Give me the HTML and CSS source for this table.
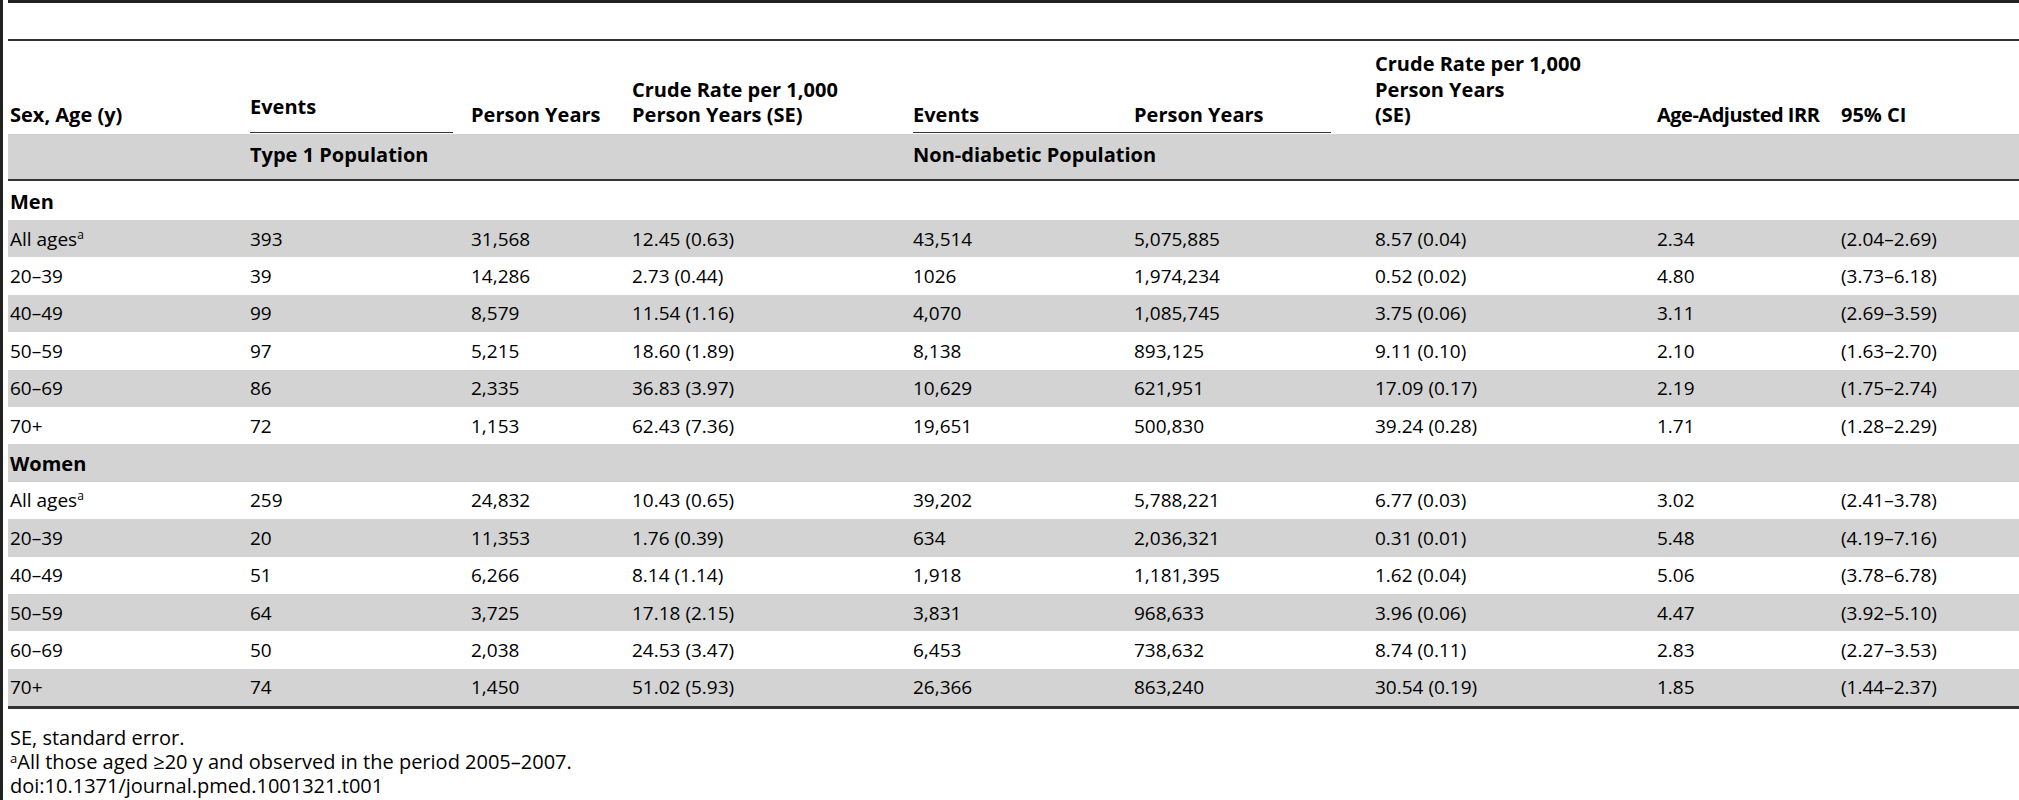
FILE: index.html
```html
<!DOCTYPE html>
<html lang="en">

<head>
    <meta charset="UTF-8">
    <title>Table 1</title>
    <link rel="stylesheet" href="styles.css">
</head>

<body>
    <div class="page">
        <table class="rates">
            <colgroup>
                <col class="c-sex">
                <col class="c-events">
                <col class="c-py">
                <col class="c-crude">
                <col class="c-events2">
                <col class="c-py2">
                <col class="c-crude2">
                <col class="c-irr">
                <col class="c-ci">
            </colgroup>
            <thead>
                <tr class="caption-row">
                    <td colspan="9"></td>
                </tr>
                <tr class="head-row">
                    <th class="first">Sex, Age (y)</th>
                    <th class="ul-single"><div class="ul raised">Events</div></th>
                    <th>Person Years</th>
                    <th>Crude Rate per 1,000<br>Person Years (SE)</th>
                    <th class="ul-start"><div class="ul">Events</div></th>
                    <th class="ul-end"><div class="ul">Person Years</div></th>
                    <th>Crude Rate per 1,000<br>Person Years<br>(SE)</th>
                    <th class="irr">Age-Adjusted IRR</th>
                    <th>95% CI</th>
                </tr>
                <tr class="group-row">
                    <th class="first"></th>
                    <th colspan="3">Type 1 Population</th>
                    <th colspan="5">Non-diabetic Population</th>
                </tr>
            </thead>
            <tbody>
                <tr class="section">
                    <td class="first" colspan="9">Men</td>
                </tr>
                <tr class="shade">
                    <td class="first">All ages<sup>a</sup></td>
                    <td>393</td><td>31,568</td><td>12.45 (0.63)</td>
                    <td>43,514</td><td>5,075,885</td><td>8.57 (0.04)</td>
                    <td>2.34</td><td>(2.04–2.69)</td>
                </tr>
                <tr>
                    <td class="first">20–39</td>
                    <td>39</td><td>14,286</td><td>2.73 (0.44)</td>
                    <td>1026</td><td>1,974,234</td><td>0.52 (0.02)</td>
                    <td>4.80</td><td>(3.73–6.18)</td>
                </tr>
                <tr class="shade">
                    <td class="first">40–49</td>
                    <td>99</td><td>8,579</td><td>11.54 (1.16)</td>
                    <td>4,070</td><td>1,085,745</td><td>3.75 (0.06)</td>
                    <td>3.11</td><td>(2.69–3.59)</td>
                </tr>
                <tr>
                    <td class="first">50–59</td>
                    <td>97</td><td>5,215</td><td>18.60 (1.89)</td>
                    <td>8,138</td><td>893,125</td><td>9.11 (0.10)</td>
                    <td>2.10</td><td>(1.63–2.70)</td>
                </tr>
                <tr class="shade">
                    <td class="first">60–69</td>
                    <td>86</td><td>2,335</td><td>36.83 (3.97)</td>
                    <td>10,629</td><td>621,951</td><td>17.09 (0.17)</td>
                    <td>2.19</td><td>(1.75–2.74)</td>
                </tr>
                <tr>
                    <td class="first">70+</td>
                    <td>72</td><td>1,153</td><td>62.43 (7.36)</td>
                    <td>19,651</td><td>500,830</td><td>39.24 (0.28)</td>
                    <td>1.71</td><td>(1.28–2.29)</td>
                </tr>
                <tr class="shade section">
                    <td class="first" colspan="9">Women</td>
                </tr>
                <tr>
                    <td class="first">All ages<sup>a</sup></td>
                    <td>259</td><td>24,832</td><td>10.43 (0.65)</td>
                    <td>39,202</td><td>5,788,221</td><td>6.77 (0.03)</td>
                    <td>3.02</td><td>(2.41–3.78)</td>
                </tr>
                <tr class="shade">
                    <td class="first">20–39</td>
                    <td>20</td><td>11,353</td><td>1.76 (0.39)</td>
                    <td>634</td><td>2,036,321</td><td>0.31 (0.01)</td>
                    <td>5.48</td><td>(4.19–7.16)</td>
                </tr>
                <tr>
                    <td class="first">40–49</td>
                    <td>51</td><td>6,266</td><td>8.14 (1.14)</td>
                    <td>1,918</td><td>1,181,395</td><td>1.62 (0.04)</td>
                    <td>5.06</td><td>(3.78–6.78)</td>
                </tr>
                <tr class="shade">
                    <td class="first">50–59</td>
                    <td>64</td><td>3,725</td><td>17.18 (2.15)</td>
                    <td>3,831</td><td>968,633</td><td>3.96 (0.06)</td>
                    <td>4.47</td><td>(3.92–5.10)</td>
                </tr>
                <tr>
                    <td class="first">60–69</td>
                    <td>50</td><td>2,038</td><td>24.53 (3.47)</td>
                    <td>6,453</td><td>738,632</td><td>8.74 (0.11)</td>
                    <td>2.83</td><td>(2.27–3.53)</td>
                </tr>
                <tr class="shade">
                    <td class="first">70+</td>
                    <td>74</td><td>1,450</td><td>51.02 (5.93)</td>
                    <td>26,366</td><td>863,240</td><td>30.54 (0.19)</td>
                    <td>1.85</td><td>(1.44–2.37)</td>
                </tr>
            </tbody>
        </table>

        <div class="notes">
            <p>SE, standard error.</p>
            <p><sup>a</sup>All those aged ≥20 y and observed in the period 2005–2007.</p>
            <p>doi:10.1371/journal.pmed.1001321.t001</p>
        </div>
    </div>
</body>

</html>
```

FILE: styles.css
```css
body {
    margin: 0;
    background-color: #ffffff;
    font-family: "Open Sans", "Noto Sans", sans-serif;
    font-size: 19px;
    color: #000000;
}

.page {
    border-left: 3px solid #222222;
    padding-left: 5px;
    min-height: 800px;
    box-sizing: border-box;
}

.rates {
    width: 2011px;
    table-layout: fixed;
    border-collapse: collapse;
    border-top: 3px solid #222222;
    border-bottom: 3px solid #333333;
}

.c-sex { width: 238px; }
.c-events { width: 221px; }
.c-py { width: 161px; }
.c-crude { width: 281px; }
.c-events2 { width: 221px; }
.c-py2 { width: 241px; }
.c-crude2 { width: 282px; }
.c-irr { width: 184px; }
.c-ci { width: 182px; }

.rates th,
.rates td {
    padding: 0 4px;
    text-align: left;
    white-space: nowrap;
}

.rates .first {
    padding-left: 2px;
}

.caption-row td {
    height: 36px;
    border-bottom: 2px solid #333333;
}

/* Column headings */
.head-row th {
    height: 94px;
    box-sizing: border-box;
    vertical-align: bottom;
    font-size: 20px;
    font-weight: bold;
    line-height: 25.7px;
    padding-bottom: 6px;
}

.head-row th.ul-single,
.head-row th.ul-start,
.head-row th.ul-end {
    padding-bottom: 1px;
}

.head-row th.ul-single {
    padding-right: 14px;
}

.head-row th.ul-start {
    padding-right: 0;
}

.head-row th.ul-end {
    padding-left: 0;
    padding-right: 40px;
}

.head-row th.irr {
    letter-spacing: -0.5px;
}

.ul {
    border-bottom: 1px solid #333333;
    padding-bottom: 4px;
}

.ul-end .ul {
    padding-left: 4px;
}

.ul.raised {
    padding-bottom: 12px;
}

.group-row th {
    height: 41px;
    background-color: #d3d3d3;
    font-size: 20px;
    font-weight: bold;
    vertical-align: middle;
    padding-bottom: 4px;
    border-bottom: 2px solid #333333;
}

/* Body rows */
.rates tbody td {
    height: 37.4px;
    vertical-align: middle;
}

.rates tbody tr.shade td {
    background-color: #d3d3d3;
}

.section td {
    font-size: 20px;
    font-weight: bold;
}

.rates tbody tr.section:first-child td {
    height: 37px;
    padding-top: 2px;
}

sup {
    font-size: 12px;
    line-height: 0;
    vertical-align: 7px;
}

.notes {
    margin-top: 17px;
    font-size: 20px;
    line-height: 23.8px;
}

.notes sup {
    font-size: 13px;
    vertical-align: 6px;
}

.notes p {
    margin: 0;
    padding-left: 2px;
}
```
